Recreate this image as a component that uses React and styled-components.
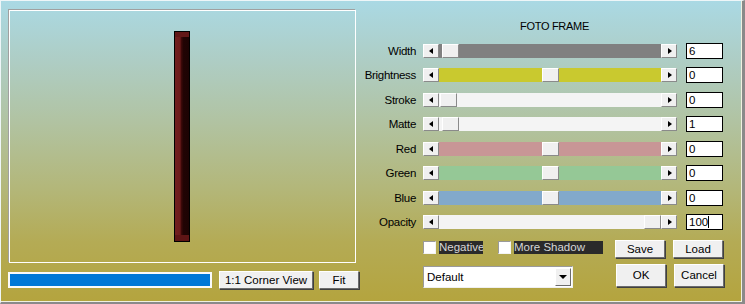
import styled, { createGlobalStyle } from "styled-components";

const GlobalStyle = createGlobalStyle`
  html, body {
    margin: 0;
    padding: 0;
  }
  body {
    font-family: "Liberation Sans", Arial, sans-serif;
    font-size: 11px;
  }
`;

const sliders = [
  { label: "Width", track: "#808080", thumb: 3, value: "6" },
  { label: "Brightness", track: "#c9c92f", thumb: 103, value: "0" },
  { label: "Stroke", track: "#f4f4f4", thumb: 1, value: "0" },
  { label: "Matte", track: "#f4f4f4", thumb: 3, value: "1" },
  { label: "Red", track: "#c89696", thumb: 103, value: "0" },
  { label: "Green", track: "#95c896", thumb: 103, value: "0" },
  { label: "Blue", track: "#82a9cb", thumb: 103, value: "0" },
  { label: "Opacity", track: "#f4f4f4", thumb: 205, value: "100", caret: true },
];

const App = () => {
  return (
    <>
      <GlobalStyle />
      <Window>
        <LeftPane>
          <Preview>
            <FrameBar />
          </Preview>
          <BottomBar>
            <Progress />
            <Button $w={94} $h={18}>1:1 Corner View</Button>
            <Button $w={40} $h={18}>Fit</Button>
          </BottomBar>
        </LeftPane>

        <RightPane>
          <Title>FOTO FRAME</Title>
          <Rows>
            {sliders.map((s) => (
              <Row key={s.label}>
                <Label>{s.label}</Label>
                <Slider>
                  <ArrowBtn>
                    <Tri $dir="left" />
                  </ArrowBtn>
                  <Track $color={s.track}>
                    <Thumb style={{ left: s.thumb }} />
                  </Track>
                  <ArrowBtn>
                    <Tri $dir="right" />
                  </ArrowBtn>
                </Slider>
                <ValueBox>
                  {s.value}
                  {s.caret && <Caret />}
                </ValueBox>
              </Row>
            ))}
          </Rows>

          <OptionRow>
            <Check>
              <Box />
              <CheckLabel $w={44}>Negative</CheckLabel>
            </Check>
            <Check>
              <Box />
              <CheckLabel $w={89}>More Shadow</CheckLabel>
            </Check>
            <Buttons>
              <Button $w={50} $h={18}>Save</Button>
              <Button $w={50} $h={18}>Load</Button>
            </Buttons>
          </OptionRow>

          <ActionRow>
            <Select>
              <span>Default</span>
              <SelectArrow>
                <Tri $dir="down" />
              </SelectArrow>
            </Select>
            <Buttons>
              <Button $w={50} $h={23}>OK</Button>
              <Button $w={50} $h={23}>Cancel</Button>
            </Buttons>
          </ActionRow>
        </RightPane>
      </Window>
    </>
  );
};

const Window = styled.div`
  width: 745px;
  height: 304px;
  box-sizing: border-box;
  display: flex;
  background: linear-gradient(
    to bottom,
    #aad9e4 0%,
    #aecdc4 20%,
    #b1c3a2 40%,
    #b3b77a 62%,
    #b4ab55 80%,
    #b4a43e 100%
  );
  border-top: 1px solid #eef6f8;
  border-left: 1px solid #eef6f8;
  border-right: 3px solid #8a8a8a;
  border-bottom: 2px solid #8a8a8a;
  box-shadow: inset -1px -1px 0 #f0f0e0;
  overflow: hidden;
`;

const LeftPane = styled.div`
  display: flex;
  flex-direction: column;
  padding: 9px 0 0 7px;
  width: 352px;
`;

const Preview = styled.div`
  width: 347px;
  height: 253px;
  box-sizing: border-box;
  margin-left: 1px;
  border: 1px solid #ffffff;
  box-shadow: -1px -1px 0 #a0a0a0;
  display: flex;
  align-items: center;
  justify-content: center;
`;

const FrameBar = styled.div`
  width: 16px;
  height: 211px;
  box-sizing: border-box;
  margin-left: -2px;
  border: 1px solid #000;
  background: linear-gradient(
    to right,
    #721f1f 0%,
    #6c1b1b 36%,
    #3c0909 46%,
    #220404 60%,
    #1c0303 100%
  );
  box-shadow: inset 0 5px 0 #621717, inset 0 -6px 0 #5e1515;
`;

const BottomBar = styled.div`
  display: flex;
  align-items: center;
  gap: 6px;
  margin-top: 8px;
  height: 18px;
`;

const Progress = styled.div`
  width: 204px;
  height: 16px;
  box-sizing: border-box;
  border: 2px solid #fafafa;
  background: #0078d7;
  margin-right: 1px;
`;

const Button = styled.div`
  width: ${(p) => p.$w}px;
  height: ${(p) => p.$h}px;
  box-sizing: border-box;
  display: flex;
  align-items: center;
  justify-content: center;
  background: #f0f0f0;
  color: #000;
  font-size: 11.5px;
  border-top: 1px solid #ffffff;
  border-left: 1px solid #ffffff;
  border-right: 1px solid #6c6c6c;
  border-bottom: 1px solid #6c6c6c;
  box-shadow: 1px 1px 0 #404040;
  white-space: nowrap;
`;

const RightPane = styled.div`
  display: flex;
  flex-direction: column;
  padding-top: 19px;
  width: 375px;
`;

const Title = styled.div`
  text-align: center;
  line-height: 13px;
  height: 13px;
  padding-left: 14px;
  color: #000;
  letter-spacing: -0.3px;
`;

const Rows = styled.div`
  display: flex;
  flex-direction: column;
  gap: 8.43px;
  margin-top: 10px;
`;

const Row = styled.div`
  display: flex;
  align-items: center;
  height: 16px;
`;

const Label = styled.div`
  width: 56px;
  text-align: right;
  font-size: 11.5px;
  letter-spacing: -0.3px;
  color: #000;
  padding-right: 7px;
`;

const Slider = styled.div`
  display: flex;
  height: 14px;
  width: 254px;
  margin-right: 9px;
`;

const ArrowBtn = styled.div`
  width: 16px;
  height: 14px;
  box-sizing: border-box;
  background: #f0f0f0;
  border-top: 1px solid #fff;
  border-left: 1px solid #fff;
  border-right: 1px solid #8a8a8a;
  border-bottom: 1px solid #8a8a8a;
  display: flex;
  align-items: center;
  justify-content: center;
`;

const Tri = styled.span`
  width: 0;
  height: 0;
  border-style: solid;
  border-color: transparent;
  ${(p) =>
    p.$dir === "left"
      ? "border-width: 3px 4px 3px 0; border-right-color: #000;"
      : p.$dir === "right"
      ? "border-width: 3px 0 3px 4px; border-left-color: #000; margin-left: 1px;"
      : "border-width: 4px 4px 0 4px; border-top-color: #000;"}
`;

const Track = styled.div`
  position: relative;
  flex: 1;
  height: 14px;
  background: ${(p) => p.$color};
`;

const Thumb = styled.div`
  position: absolute;
  top: 0;
  width: 17px;
  height: 14px;
  box-sizing: border-box;
  background: #f0f0f0;
  border-top: 1px solid #fff;
  border-left: 1px solid #fff;
  border-right: 1px solid #8a8a8a;
  border-bottom: 1px solid #8a8a8a;
`;

const ValueBox = styled.div`
  width: 37px;
  height: 16px;
  box-sizing: border-box;
  border: 1px solid #000;
  background: #fff;
  padding-left: 2px;
  display: flex;
  align-items: center;
  font-size: 11.5px;
  color: #000;
`;

const Caret = styled.span`
  display: inline-block;
  width: 1px;
  height: 12px;
  background: #000;
`;

const OptionRow = styled.div`
  display: flex;
  align-items: flex-start;
  height: 18px;
  margin-top: 10px;
  padding-left: 63px;
`;

const Check = styled.div`
  display: flex;
  align-items: center;
  gap: 3px;
  margin-top: 1px;
  margin-right: 15px;
  &:nth-child(2) {
    margin-right: 12px;
  }
`;

const Box = styled.span`
  width: 13px;
  height: 13px;
  box-sizing: border-box;
  background: #fff;
  border-top: 1px solid #9a9a9a;
  border-left: 1px solid #9a9a9a;
  border-right: 1px solid #f4f4f4;
  border-bottom: 1px solid #f4f4f4;
`;

const CheckLabel = styled.span`
  width: ${(p) => p.$w}px;
  height: 13px;
  line-height: 13px;
  background: #2a2a2a;
  color: #d6d6d6;
  font-size: 11.5px;
  white-space: nowrap;
  overflow: hidden;
`;

const Buttons = styled.div`
  display: flex;
  gap: 8px;
`;

const ActionRow = styled.div`
  display: flex;
  align-items: flex-start;
  margin-top: 6px;
  padding-left: 63px;
  gap: 43px;
`;

const Select = styled.div`
  width: 150px;
  height: 22px;
  margin-top: 2px;
  box-sizing: border-box;
  background: #fff;
  border-top: 1px solid #9a9a9a;
  border-left: 1px solid #9a9a9a;
  border-right: 1px solid #f0f0f0;
  border-bottom: 1px solid #f0f0f0;
  display: flex;
  align-items: center;
  justify-content: space-between;
  padding: 0 1px 0 3px;
  font-size: 11.5px;
  color: #000;
`;

const SelectArrow = styled.div`
  width: 16px;
  height: 18px;
  box-sizing: border-box;
  background: #f0f0f0;
  border-top: 1px solid #fff;
  border-left: 1px solid #fff;
  border-right: 1px solid #6c6c6c;
  border-bottom: 1px solid #6c6c6c;
  display: flex;
  align-items: center;
  justify-content: center;
`;

export default App;
